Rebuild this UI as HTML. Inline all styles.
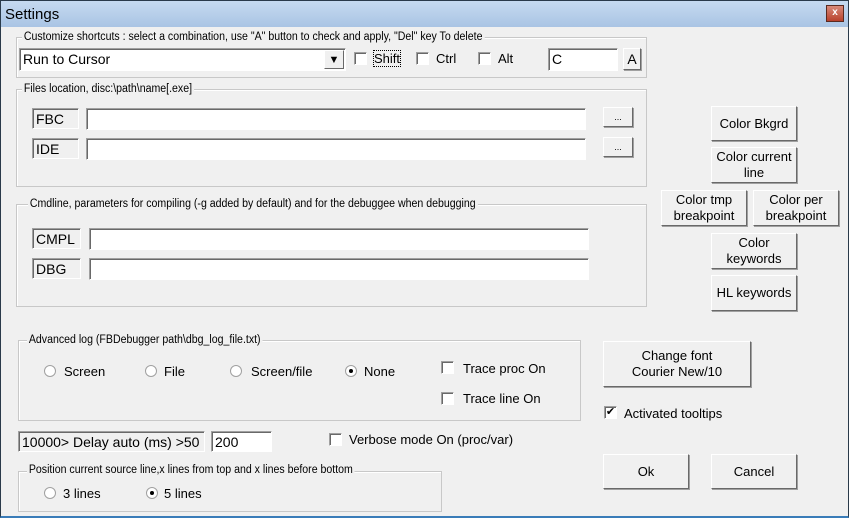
<!DOCTYPE html>
<html><head><meta charset="utf-8"><style>
*{box-sizing:border-box;margin:0;padding:0}
body{width:849px;height:518px;overflow:hidden;background:#f0f0f0;font-family:"Liberation Sans",sans-serif;font-size:13px;color:#000;position:relative}
.a{position:absolute}
.title{left:0;top:0;width:849px;height:27px;background:linear-gradient(#c6daf0,#a9c4e4);border:1px solid #2a3a4a;border-bottom:none;font-size:15px;padding:5px 0 0 4px}
.frame{left:0;top:0;width:849px;height:518px;border:1px solid #2a3a4a;border-top:none;border-bottom:2px solid #3a7cb8;pointer-events:none}
.close{left:826px;top:5px;width:18px;height:17px;background:linear-gradient(#d88a7a,#b8412c);border:1px solid #5a2a20;color:#fff;font-size:10px;font-weight:bold;text-align:center;line-height:14px}
.grp{border:1px solid #c8c8c8;box-shadow:inset 1px 1px 0 #fff}
.gl{font-size:11.5px;background:#f0f0f0;padding:0 2px;transform:scaleX(.92);transform-origin:left}
.sunk{background:#fff;border-top:1px solid #a0a0a0;border-left:1px solid #a0a0a0;border-bottom:1px solid #fff;border-right:1px solid #fff;box-shadow:inset 1px 1px 0 #696969;padding:2px 0 0 3px;font-size:14px}
.lab{background:#f0f0f0}
.btn{background:#f0f0f0;border:1px solid;border-color:#fff #696969 #696969 #fff;box-shadow:1px 1px 0 #a0a0a0;text-align:center;display:flex;align-items:center;justify-content:center;line-height:16px;font-size:13px}
.cb{width:13px;height:13px;background:#fff;border:1px solid;border-color:#a0a0a0 #fff #fff #a0a0a0;box-shadow:inset 1px 1px 0 #696969}
.rd{width:12px;height:12px;border-radius:50%;background:#fff;border:1px solid #a0a0a0}
.rd.on::after{content:"";position:absolute;left:3px;top:3px;width:4px;height:4px;border-radius:50%;background:#000}
</style></head><body>
<div class="a title">Settings</div>
<div class="a close">x</div>

<div class="a grp" style="left:16px;top:37px;width:631px;height:41px"></div>
<div class="a gl" style="left:22px;top:31px">Customize shortcuts : select a combination, use "A" button to check and apply, "Del" key To delete</div>
<div class="a sunk" style="left:19px;top:48px;width:327px;height:23px">Run to Cursor</div>
<div class="a btn" style="left:324px;top:50px;width:20px;height:19px;box-shadow:none;font-size:11px">▼</div>
<div class="a cb" style="left:354px;top:52px"></div><div class="a" style="left:374px;top:51px;outline:1px dotted #000">Shift</div>
<div class="a cb" style="left:416px;top:52px"></div><div class="a" style="left:436px;top:51px">Ctrl</div>
<div class="a cb" style="left:478px;top:52px"></div><div class="a" style="left:498px;top:51px">Alt</div>
<div class="a sunk" style="left:548px;top:48px;width:70px;height:23px">C</div>
<div class="a btn" style="left:623px;top:48px;width:18px;height:22px;font-size:14px">A</div>

<div class="a grp" style="left:16px;top:89px;width:631px;height:98px"></div>
<div class="a gl" style="left:22px;top:83px">Files location, disc:\path\name[.exe]</div>
<div class="a sunk lab" style="left:32px;top:108px;width:47px;height:21px">FBC</div>
<div class="a sunk" style="left:86px;top:108px;width:500px;height:22px"></div>
<div class="a btn" style="left:603px;top:107px;width:30px;height:20px;font-size:9px">...</div>
<div class="a sunk lab" style="left:32px;top:138px;width:47px;height:21px">IDE</div>
<div class="a sunk" style="left:86px;top:138px;width:500px;height:22px"></div>
<div class="a btn" style="left:603px;top:137px;width:30px;height:20px;font-size:9px">...</div>

<div class="a grp" style="left:16px;top:204px;width:631px;height:103px"></div>
<div class="a gl" style="left:28px;top:198px">Cmdline, parameters for compiling (-g added by default) and for the debuggee when debugging</div>
<div class="a sunk lab" style="left:32px;top:228px;width:49px;height:21px">CMPL</div>
<div class="a sunk" style="left:89px;top:228px;width:500px;height:22px"></div>
<div class="a sunk lab" style="left:32px;top:258px;width:49px;height:21px">DBG</div>
<div class="a sunk" style="left:89px;top:258px;width:500px;height:22px"></div>

<div class="a btn" style="left:711px;top:106px;width:86px;height:35px">Color Bkgrd</div>
<div class="a btn" style="left:711px;top:147px;width:86px;height:36px">Color current<br>line</div>
<div class="a btn" style="left:661px;top:190px;width:86px;height:36px">Color tmp<br>breakpoint</div>
<div class="a btn" style="left:753px;top:190px;width:86px;height:36px">Color per<br>breakpoint</div>
<div class="a btn" style="left:711px;top:233px;width:86px;height:36px">Color<br>keywords</div>
<div class="a btn" style="left:711px;top:275px;width:86px;height:36px">HL keywords</div>

<div class="a grp" style="left:18px;top:340px;width:563px;height:81px"></div>
<div class="a gl" style="left:27px;top:334px">Advanced log (FBDebugger path\dbg_log_file.txt)</div>
<div class="a rd" style="left:44px;top:365px"></div><div class="a" style="left:64px;top:364px">Screen</div>
<div class="a rd" style="left:145px;top:365px"></div><div class="a" style="left:164px;top:364px">File</div>
<div class="a rd" style="left:230px;top:365px"></div><div class="a" style="left:251px;top:364px">Screen/file</div>
<div class="a rd on" style="left:345px;top:365px"></div><div class="a" style="left:364px;top:364px">None</div>
<div class="a cb" style="left:441px;top:361px"></div><div class="a" style="left:463px;top:361px">Trace proc On</div>
<div class="a cb" style="left:441px;top:392px"></div><div class="a" style="left:463px;top:391px">Trace line On</div>

<div class="a sunk lab" style="left:18px;top:431px;width:187px;height:21px">10000&gt; Delay auto (ms) &gt;50</div>
<div class="a sunk" style="left:211px;top:431px;width:61px;height:21px">200</div>
<div class="a cb" style="left:329px;top:433px"></div><div class="a" style="left:349px;top:432px">Verbose mode On (proc/var)</div>

<div class="a grp" style="left:18px;top:471px;width:424px;height:41px"></div>
<div class="a gl" style="left:27px;top:464px">Position current source line,x lines from top and x lines before bottom</div>
<div class="a rd" style="left:44px;top:487px"></div><div class="a" style="left:63px;top:486px">3 lines</div>
<div class="a rd on" style="left:146px;top:487px"></div><div class="a" style="left:164px;top:486px">5 lines</div>

<div class="a btn" style="left:603px;top:341px;width:148px;height:46px">Change font<br>Courier New/10</div>
<div class="a cb" style="left:604px;top:406px;font-size:11px;line-height:10px;text-align:center">✔</div>
<div class="a" style="left:624px;top:406px">Activated tooltips</div>
<div class="a btn" style="left:603px;top:454px;width:86px;height:35px">Ok</div>
<div class="a btn" style="left:711px;top:454px;width:86px;height:35px">Cancel</div>
<div class="a frame"></div>
</body></html>
